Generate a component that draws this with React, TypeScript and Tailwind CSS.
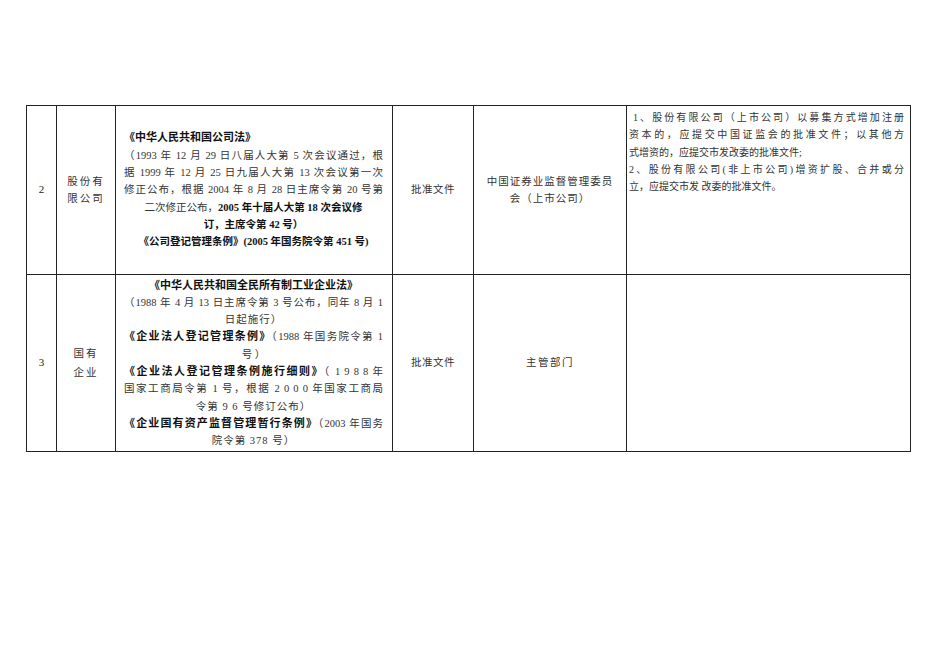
import React from 'react';

const font = "font-['Liberation_Serif','Noto_Sans_CJK_SC',serif]";
const full = 'text-justify [text-align-last:justify]';
const cell = 'border-r border-b border-[#222] flex items-center justify-center';
const bold = 'font-bold text-[11px] text-[#111]';

export default function App() {
  return (
    <div className={`min-h-screen bg-white ${font} text-[10.5px] leading-[17.3px] text-[#333]`}>
      <div className="ml-[26px] pt-[105px]">
        <div className="grid grid-cols-[30px_59px_277px_81px_153px_284px] grid-rows-[169px_177px] border-l border-t border-[#222] w-max">
          {/* row 2 */}
          <div className={cell}>
            <span className="text-[#222] text-[11px]">2</span>
          </div>
          <div className={`${cell} flex-col tracking-[2px]`}>
            <div>股份有</div>
            <div>限公司</div>
          </div>
          <div className={`${cell} flex-col items-stretch pl-[8px] pr-[9px]`}>
            <div className={bold}>《中华人民共和国公司法》</div>
            <div className={full}>（1993 年 12 月 29 日八届人大第 5 次会议通过，根</div>
            <div className={full}>据 1999 年 12 月 25 日九届人大第 13 次会议第一次</div>
            <div className={full}>修正公布，根据 2004 年 8 月 28 日主席令第 20 号第</div>
            <div className="text-center">
              二次修正公布，<span className="font-bold text-[#111]">2005 年十届人大第 18 次会议修</span>
            </div>
            <div className="text-center font-bold text-[#111]">订，主席令第 42 号）</div>
            <div className="text-center font-bold text-[#111]">《公司登记管理条例》(2005 年国务院令第 451 号)</div>
          </div>
          <div className={`${cell} tracking-[0.5px]`}>批准文件</div>
          <div className={`${cell} flex-col tracking-[1px] px-[8px]`}>
            <div>中国证券业监督管理委员</div>
            <div>会（上市公司）</div>
          </div>
          <div className="border-r border-b border-[#222] pl-[2px] pr-[6px] pt-[3px] text-[10px]">
            <div className={`${full} pl-[4px]`}>1、股份有限公司（上市公司）以募集方式增加注册</div>
            <div className={full}>资本的，应提交中国证监会的批准文件；以其他方</div>
            <div>式增资的，应提交市发改委的批准文件;</div>
            <div className={full}>2、股份有限公司(非上市公司)增资扩股、合并或分</div>
            <div>立，应提交市发 改委的批准文件。</div>
          </div>

          {/* row 3 */}
          <div className={cell}>
            <span className="text-[#222] text-[11px]">3</span>
          </div>
          <div className={`${cell} flex-col tracking-[2px] leading-[19px]`}>
            <div>国有</div>
            <div>企业</div>
          </div>
          <div className={`${cell} flex-col items-stretch pl-[8px] pr-[9px]`}>
            <div className={`text-center ${bold}`}>《中华人民共和国全民所有制工业企业法》</div>
            <div className={full}>（1988 年 4 月 13 日主席令第 3 号公布，同年 8 月 1</div>
            <div className="text-center tracking-[1px]">日起施行）</div>
            <div className={full}>
              <span className={bold}>《企业法人登记管理条例》</span>（1988 年国务院令第 1
            </div>
            <div className="text-center">号 ）</div>
            <div className={full}>
              <span className={bold}>《企业法人登记管理条例施行细则》</span>（ 1 9 8 8 年
            </div>
            <div className={full}>国家工商局令第 1 号，根据 2 0 0 0 年国家工商局</div>
            <div className="text-center tracking-[1px]">令第 9 6 号修订公布）</div>
            <div className={full}>
              <span className={bold}>《企业国有资产监督管理暂行条例》</span>（2003 年国务
            </div>
            <div className="text-center tracking-[1px]">院令第 378 号）</div>
          </div>
          <div className={`${cell} tracking-[0.5px]`}>批准文件</div>
          <div className={`${cell} tracking-[1.5px]`}>主管部门</div>
          <div className="border-r border-b border-[#222]"></div>
        </div>
      </div>
    </div>
  );
}
